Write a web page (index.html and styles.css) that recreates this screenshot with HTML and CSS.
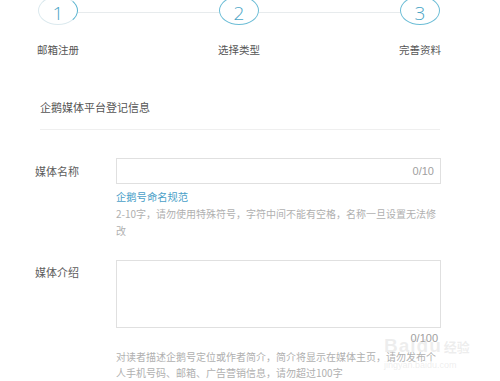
FILE: index.html
```html
<!DOCTYPE html>
<html lang="zh-CN">
<head>
<meta charset="utf-8">
<title>企鹅媒体平台登记信息</title>
<link rel="stylesheet" href="styles.css">
</head>
<body>
<div class="page">
  <div class="steps">
    <div class="track">
      <div class="circle c1"><span>1</span></div>
      <div class="line"></div>
      <div class="circle"><span>2</span></div>
      <div class="line"></div>
      <div class="circle"><span>3</span></div>
    </div>
    <div class="labels">
      <span class="step-label">邮箱注册</span>
      <span class="step-label">选择类型</span>
      <span class="step-label">完善资料</span>
    </div>
  </div>

  <div class="section-title">企鹅媒体平台登记信息</div>

  <div class="form">
    <div class="row">
      <div class="label">媒体名称</div>
      <div class="field">
        <div class="input"><span class="count">0/10</span></div>
        <a class="link">企鹅号命名规范</a>
        <p class="hint">2-10字，请勿使用特殊符号，字符中间不能有空格，名称一旦设置无法修改</p>
      </div>
    </div>
    <div class="row row2">
      <div class="label label2">媒体介绍</div>
      <div class="field">
        <div class="textarea"></div>
        <div class="count2">0/100</div>
        <p class="hint hint2">对读者描述企鹅号定位或作者简介，简介将显示在媒体主页，请勿发布个人手机号码、邮箱、广告营销信息，请勿超过100字</p>
      </div>
    </div>
  </div>

  <div class="watermark">
    <span class="wm-bai">Bai</span><span class="wm-du">du</span><span class="wm-jy">经验</span>
    <span class="wm-url">jingyan.baidu.com</span>
  </div>
</div>
</body>
</html>
```

FILE: styles.css
```css
html, body {
  margin: 0;
  padding: 0;
  background: #ffffff;
}
body {
  font-family: "Noto Sans CJK SC", "Noto Sans", sans-serif;
  color: #555;
  overflow: hidden;
}
.page {
  position: relative;
  width: 500px;
  height: 381px;
  overflow: hidden;
}

/* steps */
.steps {
  padding: 0 60px 0 38px;
}
.track {
  display: flex;
  align-items: flex-start;
  height: 25px;
}
.circle {
  box-sizing: border-box;
  width: 40px;
  height: 29px;
  margin-top: -4px;
  padding-top: 4px;
  border: 1.5px solid #6cbdd6;
  border-radius: 50%;
  display: flex;
  align-items: center;
  justify-content: center;
  flex: none;
  font-family: "Open Sans", "Liberation Sans", sans-serif;
  font-weight: 300;
  font-size: 19px;
  color: #4aa5c6;
}
.circle span {
  line-height: 20px;
}
.c1 {
  border-color: #dbe9ee #58b3cf #dbe9ee #dbe9ee;
}
.line {
  flex: 1;
  height: 1px;
  margin-top: 12px;
  background: #e7ebed;
}
.labels {
  display: flex;
  justify-content: space-between;
  margin-top: 17px;
}
.step-label {
  width: 40px;
  display: flex;
  justify-content: center;
  white-space: nowrap;
  font-size: 10.5px;
  line-height: 16px;
  color: #555;
}

/* section title */
.section-title {
  margin: 41px 60px 0 40px;
  padding-bottom: 14px;
  border-bottom: 1px solid #efefef;
  font-size: 11px;
  line-height: 16px;
  color: #555;
}

/* form */
.form {
  padding: 0 59px 0 35px;
}
.row {
  display: flex;
  margin-top: 28px;
}
.row2 {
  margin-top: 21px;
}
.label {
  width: 81px;
  flex: none;
  font-size: 11px;
  line-height: 26px;
  color: #5c5c5c;
}
.label2 {
  line-height: 16px;
  padding-top: 4px;
}
.field {
  width: 325px;
}
.input {
  box-sizing: border-box;
  height: 26px;
  border: 1px solid #e0e0e0;
  display: flex;
  align-items: center;
  justify-content: flex-end;
  padding-right: 6px;
}
.count, .count2 {
  font-family: "Liberation Sans", sans-serif;
  font-size: 11px;
  color: #a0a0a0;
}
.link {
  display: block;
  margin-top: 4px;
  font-size: 10.3px;
  line-height: 17px;
  color: #4aa0c8;
  text-decoration: none;
}
.hint {
  margin: 0;
  font-size: 10px;
  line-height: 17px;
  color: #b0b0b0;
}
.textarea {
  box-sizing: border-box;
  height: 68px;
  border: 1px solid #e0e0e0;
}
.count2 {
  text-align: right;
  line-height: 14px;
  margin-top: 3px;
  padding-right: 3px;
}
.hint2 {
  margin-top: 4px;
  line-height: 16px;
}

/* watermark overlay */
.watermark {
  position: absolute;
  left: 384px;
  top: 336px;
  width: 100px;
  color: rgba(205, 205, 205, 0.35);
  font-family: "Liberation Sans", sans-serif;
  white-space: nowrap;
  pointer-events: none;
}
.wm-bai, .wm-du {
  font-size: 19px;
  font-weight: bold;
  line-height: 20px;
  letter-spacing: 1px;
}
.wm-jy {
  font-family: "Noto Sans CJK SC", sans-serif;
  font-size: 13px;
  font-weight: bold;
  margin-left: 2px;
}
.wm-url {
  display: block;
  font-size: 9px;
  line-height: 12px;
  margin-top: 3px;
}
```
